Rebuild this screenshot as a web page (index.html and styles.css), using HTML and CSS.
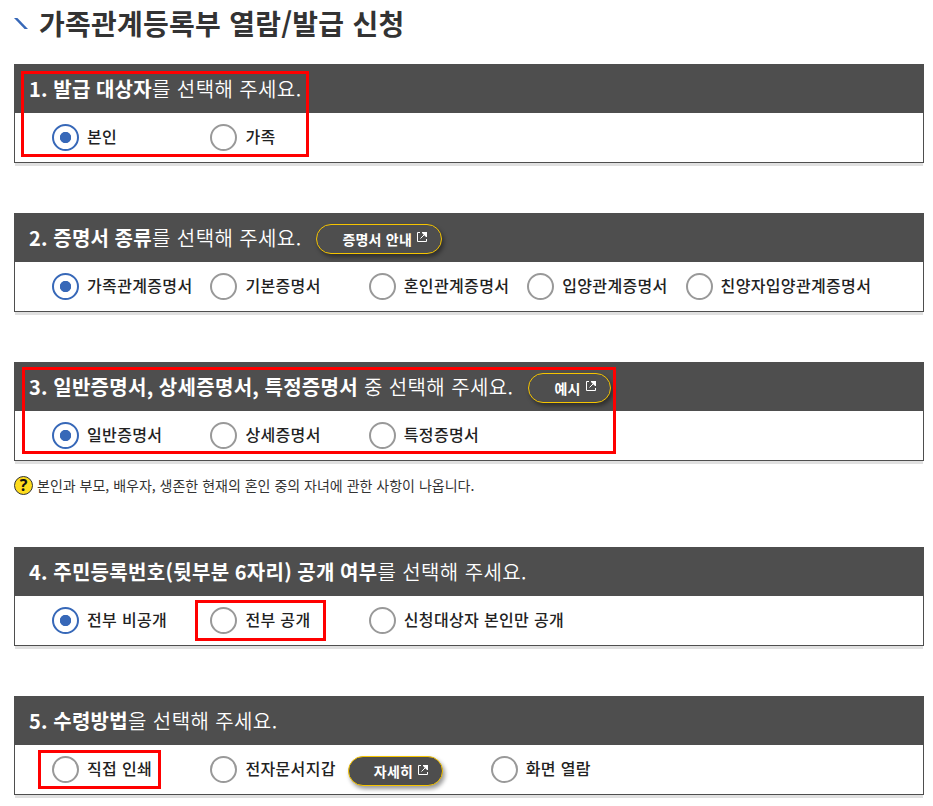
FILE: index.html
```html
<!DOCTYPE html>
<html lang="ko">
<head>
    <meta charset="UTF-8">
    <meta name="viewport" content="width=device-width, initial-scale=1.0">
    <title>가족관계등록부 열람/발급 신청</title>
    <link rel="stylesheet" href="styles.css">
</head>
<body>

<svg width="0" height="0" class="symbols">
    <symbol id="popup" viewBox="0 0 10 10">
        <path d="M3 .5H.5v9h9V7M3.5 6.5l5-5" fill="none" stroke="currentColor" stroke-width="1"/>
        <path d="M5 0h5v5H9L5 1z" fill="currentColor"/>
    </symbol>
</svg>

<div class="container">
    <h1>
        <svg class="slash" width="14" height="11" viewBox="0 0 14 11"><path d="M0 0h3.4L14 11h-3.4z" fill="#3768b8"/></svg>
        <span>가족관계등록부 열람/발급 신청</span>
    </h1>

    <section class="card">
        <h2><b>1. 발급 대상자</b>를 선택해 주세요.</h2>
        <div class="options">
            <label><input type="radio" name="target" checked><span>본인</span></label>
            <label><input type="radio" name="target"><span>가족</span></label>
        </div>
        <div class="mark mark-target"></div>
    </section>

    <section class="card">
        <h2><b>2. 증명서 종류</b>를 선택해 주세요. <button class="pill">증명서 안내<svg><use href="#popup"/></svg></button></h2>
        <div class="options">
            <label><input type="radio" name="kind" checked><span>가족관계증명서</span></label>
            <label><input type="radio" name="kind"><span>기본증명서</span></label>
            <label><input type="radio" name="kind"><span>혼인관계증명서</span></label>
            <label><input type="radio" name="kind"><span>입양관계증명서</span></label>
            <label><input type="radio" name="kind"><span>친양자입양관계증명서</span></label>
        </div>
    </section>

    <section class="card with-help">
        <h2><b>3. 일반증명서, 상세증명서, 특정증명서</b>&nbsp;중 선택해 주세요. <button class="pill">예시<svg><use href="#popup"/></svg></button></h2>
        <div class="options">
            <label><input type="radio" name="detail" checked><span>일반증명서</span></label>
            <label><input type="radio" name="detail"><span>상세증명서</span></label>
            <label><input type="radio" name="detail"><span>특정증명서</span></label>
        </div>
        <div class="mark mark-detail"></div>
    </section>
    <p class="help"><i>?</i><span>본인과 부모, 배우자, 생존한 현재의 혼인 중의 자녀에 관한 사항이 나옵니다.</span></p>

    <section class="card">
        <h2><b>4. 주민등록번호(뒷부분 6자리) 공개 여부</b>를 선택해 주세요.</h2>
        <div class="options">
            <label><input type="radio" name="open" checked><span>전부 비공개</span></label>
            <label><input type="radio" name="open"><span>전부 공개</span></label>
            <label><input type="radio" name="open"><span>신청대상자 본인만 공개</span></label>
        </div>
        <div class="mark mark-open"></div>
    </section>

    <section class="card">
        <h2><b>5. 수령방법</b>을 선택해 주세요.</h2>
        <div class="options">
            <label><input type="radio" name="receive"><span>직접 인쇄</span></label>
            <div class="wallet">
                <label><input type="radio" name="receive"><span>전자문서지갑</span></label>
                <button class="pill">자세히<svg><use href="#popup"/></svg></button>
            </div>
            <label><input type="radio" name="receive"><span>화면 열람</span></label>
        </div>
        <div class="mark mark-print"></div>
    </section>
</div>

</body>
</html>
```
FILE: styles.css
```css
* {
    box-sizing: border-box;
}
body {
    margin: 0;
    background: #fff;
    color: #222;
    font-family: "Noto Sans CJK KR", sans-serif;
}
.symbols {
    position: absolute;
}
.container {
    width: 910px;
    margin-left: 14px;
}
h1 {
    display: flex;
    height: 64px;
    margin: 0;
    color: #333;
    font-size: 28px;
    line-height: 46px;
    font-weight: 700;
    letter-spacing: 0.25px;
    white-space: nowrap;
}
.slash {
    margin: 18px 11px 0 0;
}
.card {
    position: relative;
    height: 99px;
    margin-bottom: 50px;
    border: 1px solid #4e4e4e;
    border-top: 0;
    box-shadow: 0 4px 0 -1px #e0e0e0;
}
.card h2 {
    display: flex;
    align-items: center;
    height: 49px;
    margin: 0;
    padding: 0 14px;
    background: #4e4e4e;
    color: #fff;
    font-size: 20px;
    font-weight: 350;
    letter-spacing: 0.4px;
    white-space: nowrap;
}
.card b {
    font-weight: 700;
    letter-spacing: 0.3px;
    word-spacing: -0.6px;
}
.options {
    display: grid;
    grid-template-columns: repeat(5, 158.4px);
    align-items: center;
    height: 49px;
    padding-left: 37px;
}
.options label {
    display: flex;
    align-items: center;
    font-size: 16px;
    font-weight: 500;
    letter-spacing: 0.35px;
    white-space: nowrap;
}
.options label span {
    margin-bottom: 4px;
}
.options input {
    appearance: none;
    flex: none;
    width: 27px;
    height: 27px;
    margin: 0 8px 0 0;
    border: 2px solid #999;
    border-radius: 50%;
    background: #fff;
}
.options input:checked {
    border-color: #3768b8;
    background: radial-gradient(circle, #3768b8 5.3px, #fff 6px);
}
.pill {
    display: flex;
    align-items: center;
    height: 30px;
    margin: 2px 0 0 15px;
    padding: 0 14px 0 25px;
    border: 1px solid #f5c400;
    border-radius: 15px;
    background: #4e4e4e;
    box-shadow: 2px 3px 4px rgba(0, 0, 0, 0.4);
    color: #fff;
    font-family: inherit;
    font-size: 14px;
    font-weight: 700;
    letter-spacing: 0.2px;
    line-height: 20px;
    white-space: nowrap;
}
.pill svg {
    width: 10px;
    height: 10px;
    margin: -3px 0 0 5px;
}
.with-help {
    margin-bottom: 14px;
}
.help {
    display: flex;
    align-items: center;
    height: 20px;
    margin: 0 0 52px;
    color: #333;
    font-size: 14px;
    white-space: nowrap;
}
.help i {
    width: 19px;
    height: 19px;
    margin-right: 4px;
    border: 1px solid #333;
    border-radius: 50%;
    background: #fedc1d;
    color: #111;
    font: bold 16px/17px "Open Sans", sans-serif;
    text-align: center;
}
.wallet {
    display: flex;
    align-items: center;
}
.wallet + label {
    margin-left: 122px;
}
.wallet .pill {
    margin: 3px 0 0 12px;
}

/* red guide boxes */
.mark {
    position: absolute;
    border: 3px solid #f00;
    pointer-events: none;
}
.mark-target {
    left: 6px;
    top: 7px;
    width: 288px;
    height: 86px;
}
.mark-detail {
    left: 7px;
    top: 5px;
    width: 594px;
    height: 87px;
}
.mark-open {
    left: 180px;
    top: 53px;
    width: 131px;
    height: 41px;
}
.mark-print {
    left: 23px;
    top: 54px;
    width: 123px;
    height: 39px;
}
```
